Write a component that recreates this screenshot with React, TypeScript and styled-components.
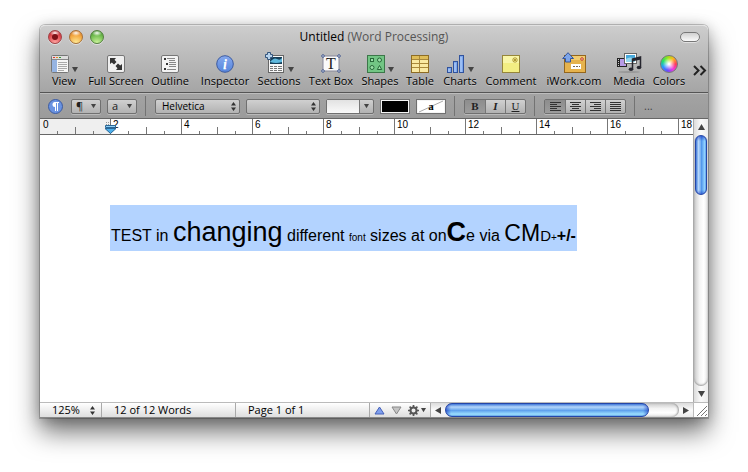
import React from 'react';
import styled, { createGlobalStyle, css } from 'styled-components';

const GlobalStyle = createGlobalStyle`
  * { box-sizing: border-box; }
  body { margin: 0; background: #fff; font-family: "Open Sans", "Noto Sans", sans-serif; font-size: 11px; color: #000; }
  button, select, input { font: inherit; color: inherit; margin: 0; padding: 0; border: 0; background: none; }
  svg { display: block; flex: none; }
`;

const Desktop = styled.main`
  padding: 25px 40px 54px;
`;

const Window = styled.section`
  display: flex;
  flex-direction: column;
  border-radius: 5px 5px 0 0;
  background: #fff;
  box-shadow: 0 0 0 1px rgba(0, 0, 0, 0.2), 0 14px 26px rgba(0, 0, 0, 0.55), 0 2px 14px rgba(0, 0, 0, 0.22);
`;

const Header = styled.header`
  border-radius: 5px 5px 0 0;
  border-top: 1px solid #e2e2e2;
  border-bottom: 1px solid #555;
  background: linear-gradient(#cdcdcd, #a5a5a5);
`;

const TitleBar = styled.div`
  display: grid;
  grid-template-columns: 1fr auto 1fr;
  align-items: center;
  height: 22px;
  padding: 0 8px;
`;

const Lights = styled.div`
  display: flex;
  gap: 7px;
`;

const Light = styled.button<{ $top: string; $main: string; $glow: string; $ring: string }>`
  width: 14px;
  height: 14px;
  border-radius: 50%;
  border: 1px solid ${(p) => p.$ring};
  background:
    radial-gradient(ellipse 5px 3px at 50% 2px, rgba(255, 255, 255, 0.95), rgba(255, 255, 255, 0) 100%),
    radial-gradient(circle at 50% 100%, ${(p) => p.$glow}, ${(p) => p.$main} 60%, ${(p) => p.$top});
  box-shadow: 0 1px 0 rgba(255, 255, 255, 0.5);
  display: flex;
  align-items: center;
  justify-content: center;
`;

const EditedDot = styled.span`
  width: 6px;
  height: 6px;
  border-radius: 50%;
  background: #7d1118;
`;

const Title = styled.h1`
  margin: 0;
  font-size: 12px;
  font-weight: 400;
  line-height: 20px;
  span { color: #555; }
`;

const Pill = styled.button`
  justify-self: end;
  width: 20px;
  height: 10px;
  border: 1px solid #777;
  border-radius: 5px;
  background: linear-gradient(#d0d0d0, #fafafa);
  box-shadow: 0 1px 0 rgba(255, 255, 255, 0.5);
`;

const Toolbar = styled.div`
  display: flex;
  gap: 4px;
  height: 44px;
  padding: 0 6px 0 7px;
`;

const ToolGroup = styled.div`
  display: flex;
`;

const Tool = styled.button<{ $width: number }>`
  width: ${(p) => p.$width}px;
  display: flex;
  flex-direction: column;
  align-items: center;
  white-space: nowrap;
  line-height: 16px;
  text-shadow: 0 1px 0 rgba(255, 255, 255, 0.35);
`;

const ToolArt = styled.span`
  display: flex;
  align-items: flex-end;
  justify-content: center;
  gap: 3px;
  height: 25px;
`;

const More = styled.button`
  margin-left: auto;
  align-self: center;
`;

const FormatBar = styled.div`
  display: flex;
  align-items: center;
  gap: 6px;
  height: 26px;
  padding: 0 8px;
  border-top: 1px solid #bdbdbd;
  border-bottom: 1px solid #666;
  background: linear-gradient(#a3a3a3, #9b9b9b);
`;

const Divider = styled.span`
  width: 1px;
  height: 20px;
  margin: 0 3px 0 2px;
  background: #737373;
`;

const bevel = css`
  height: 15px;
  border: 1px solid #707070;
  border-radius: 2px;
  background: linear-gradient(#d0d0d0, #b2b2b2);
  box-shadow: 0 1px 0 rgba(255, 255, 255, 0.3);
`;

const RoundButton = styled.button`
  margin-right: 2px;
`;

const MenuButton = styled.button`
  ${bevel}
  width: 30px;
  display: flex;
  align-items: center;
  justify-content: space-between;
  padding: 0 4px;
  line-height: 12px;
  color: #222;
`;

const PopupWrap = styled.span<{ $width: number }>`
  ${bevel}
  width: ${(p) => p.$width}px;
  display: flex;
  align-items: center;
  padding-right: 3px;
`;

const PopupSelect = styled.select`
  appearance: none;
  flex: 1;
  min-width: 0;
  height: 13px;
  padding-left: 6px;
  font-size: 10px;
  line-height: 12px;
`;

const ComboWrap = styled.span`
  ${bevel}
  width: 48px;
  display: flex;
  align-items: center;
`;

const ComboInput = styled.input`
  flex: 1;
  min-width: 0;
  height: 13px;
  background: linear-gradient(#e2e2e2, #fafafa);
  border-right: 1px solid #777;
`;

const ComboButton = styled.button`
  width: 13px;
  display: flex;
  justify-content: center;
`;

const Swatch = styled.button<{ $color: string }>`
  width: 30px;
  height: 15px;
  border: 1px solid #6f6f6f;
  background: ${(p) => p.$color};
  box-shadow: inset 0 0 0 1px #f4f4f4;
  display: flex;
`;

const Segments = styled.div`
  ${bevel}
  display: flex;
`;

const Segment = styled.button<{ $on?: boolean }>`
  width: 20px;
  height: 13px;
  display: flex;
  align-items: center;
  justify-content: center;
  color: #222;
  font-family: "Liberation Serif", serif;
  font-size: 11px;
  line-height: 13px;
  background: ${(p) => (p.$on ? 'linear-gradient(#8d8d8d, #9c9c9c)' : 'transparent')};
  & + & { border-left: 1px solid #777; }
`;

const Ellipsis = styled.span`
  color: #444;
  line-height: 12px;
`;

const Body = styled.div`
  display: grid;
  grid-template-columns: minmax(0, 1fr) 15px;
`;

const Ruler = styled.div`
  display: flex;
  height: 16px;
  overflow: hidden;
  border-bottom: 1px solid #666;
`;

const tick = 'linear-gradient(#777, #777) no-repeat';
const RulerCell = styled.div<{ $margin?: boolean }>`
  position: relative;
  flex: none;
  width: ${(p) => (p.$margin ? 70 : 71)}px;
  padding-left: ${(p) => (p.$margin ? 3 : 2)}px;
  border-left: ${(p) => (p.$margin ? 0 : 1)}px solid #777;
  font-family: "Liberation Sans", Arial, sans-serif;
  font-size: 10px;
  line-height: 12px;
  background: ${tick} 17px 12px / 1px 3px, ${tick} 35px 8px / 1px 7px, ${tick} 53px 12px / 1px 3px,
    ${(p) => (p.$margin ? '#efefef' : '#fff')};
`;

const IndentMarker = styled.span`
  position: absolute;
  left: -7px;
  top: 2px;
`;

const Page = styled.article`
  min-height: 267px;
  padding: 70px;
`;

const Line = styled.p`
  margin: 0;
  width: fit-content;
  height: 46px;
  padding: 0 1px;
  font-family: "Liberation Sans", Arial, sans-serif;
  font-size: 16px;
  line-height: 62px;
  white-space: nowrap;
  background: #b3d3ff;
`;

const Run = styled.span<{ $size: number; $bold?: boolean }>`
  font-size: ${(p) => p.$size}px;
  font-weight: ${(p) => (p.$bold ? 700 : 400)};
  line-height: 1;
`;

const VScroll = styled.div`
  grid-row: 1 / 3;
  grid-column: 2;
  display: flex;
  flex-direction: column;
  align-items: center;
  border-left: 1px solid #aaa;
  background: linear-gradient(90deg, #dcdcdc, #fbfbfb 50%, #ececec);
`;

const ArrowButton = styled.button`
  width: 14px;
  height: 16px;
  flex: none;
  display: flex;
  align-items: center;
  justify-content: center;
`;

const VTrack = styled.div`
  flex: 1;
  width: 14px;
  border-radius: 7px;
  background: linear-gradient(90deg, #c9c9c9, #f4f4f4 40%, #fff 70%, #e4e4e4);
  box-shadow: inset 0 -1px 2px #999;
`;

const VThumb = styled.div`
  height: 60px;
  margin: 0 1px;
  border-radius: 6px;
  border: 1px solid #2446a8;
  background:
    linear-gradient(rgba(20, 50, 190, 0.6), rgba(20, 50, 190, 0) 5px, rgba(20, 50, 190, 0) 54px, rgba(20, 50, 190, 0.5)),
    linear-gradient(90deg, #3f78d8, #b4d6fa 25%, #74aef0 48%, #4c92ea 52%, #8fd0ff 85%, #5fa0e6);
`;

const Footer = styled.footer`
  grid-column: 1 / 3;
  display: flex;
  height: 16px;
  border-top: 1px solid #bbb;
  border-bottom: 1px solid #888;
  background: linear-gradient(#fff, #dedede);
`;

const StatusCell = styled.div<{ $width: number }>`
  width: ${(p) => p.$width}px;
  flex: none;
  display: flex;
  align-items: center;
  padding-left: 12px;
  border-right: 1px solid #aaa;
  line-height: 14px;
  white-space: nowrap;
`;

const ZoomSelect = styled.select`
  appearance: none;
  width: 38px;
  height: 14px;
  line-height: 14px;
`;

const StatusButtons = styled.div`
  display: flex;
  align-items: center;
  gap: 6px;
  width: 60px;
  flex: none;
  padding-left: 4px;
`;

const IconButton = styled.button`
  display: flex;
  align-items: center;
  gap: 2px;
`;

const HScroll = styled.div`
  flex: 1;
  min-width: 0;
  display: flex;
  align-items: center;
  border-left: 1px solid #aaa;
  background: linear-gradient(#dcdcdc, #fbfbfb 50%, #ececec);
`;

const HTrack = styled.div`
  flex: 1;
  height: 14px;
  border-radius: 7px;
  background: linear-gradient(#c9c9c9, #f4f4f4 40%, #fff 70%, #e4e4e4);
  box-shadow: inset -1px 0 2px #999;
`;

const HThumb = styled.div`
  width: 87%;
  height: 14px;
  border-radius: 7px;
  border: 1px solid #2446a8;
  background:
    linear-gradient(90deg, rgba(20, 50, 190, 0.6), rgba(20, 50, 190, 0) 5px, rgba(20, 50, 190, 0) calc(100% - 5px), rgba(20, 50, 190, 0.5)),
    linear-gradient(#3f78d8, #b4d6fa 25%, #74aef0 48%, #5c9eec 52%, #9ce0ff 85%, #5fa0e6);
`;

const Grip = styled.div`
  width: 15px;
  flex: none;
  border-left: 1px solid #bbb;
  background: #fff;
`;

type Dir = 'up' | 'down' | 'left' | 'right';
const triangles: Record<Dir, string> = {
  up: '0,6 3.5,0 7,6',
  down: '0,0 7,0 3.5,6',
  left: '6,0 6,7 0,3.5',
  right: '0,0 0,7 6,3.5',
};

const Triangle = ({ dir, size = 7, fill = '#444' }: { dir: Dir; size?: number; fill?: string }) => (
  <svg width={size} height={size} viewBox="0 0 7 7" aria-hidden="true">
    <polygon points={triangles[dir]} fill={fill} />
  </svg>
);

const UpDown = () => (
  <svg width="5" height="9" viewBox="0 0 5 9" aria-hidden="true">
    <path d="M0 3.5 2.5 0 5 3.5zM0 5.5h5L2.5 9z" fill="#333" />
  </svg>
);

const ViewIcon = () => (
  <svg width="18" height="18" viewBox="0 0 18 18">
    <rect x=".5" y=".5" width="17" height="17" rx="1" fill="#f6f6f6" stroke="#777" />
    <rect x="1" y="1" width="16" height="3" fill="#ddd" />
    <rect x="2" y="2" width="2" height="1" fill="#d33" />
    <rect x="5" y="2" width="2" height="1" fill="#e98a20" />
    <rect x="8" y="2" width="2" height="1" fill="#393" />
    <path d="M1 4.5h16" stroke="#888" />
    <rect x="1" y="5" width="5" height="12" fill="#96b4e2" />
    <path d="M7 7.5h9M7 9.5h9M7 11.5h9M7 13.5h9M7 15.5h6" stroke="#aaa" />
  </svg>
);

const FullScreenIcon = () => (
  <svg width="18" height="18" viewBox="0 0 18 18">
    <rect x=".5" y=".5" width="17" height="17" rx="1.5" fill="#efefef" stroke="#777" />
    <path d="M3 3h6L7.500 4.800 9.500 7 7 9.500 4.800 7.500 3 9z" fill="#333" />
    <path d="M15 15H9l1.500-1.800L8.500 11 11 8.500l2.200 2L15 9z" fill="#333" />
  </svg>
);

const OutlineIcon = () => (
  <svg width="18" height="18" viewBox="0 0 18 18">
    <rect x=".5" y=".5" width="17" height="17" rx="1.5" fill="#f3f3f3" stroke="#777" />
    <path d="M6 3.500h8M8 5.500h6M8 7.500h7M8 9.500h7M8 11.500h7M6 14.500h9" stroke="#888" />
    <path d="M3 3h2v2H3zM5 8h2v2H5zM3 13h2v2H3z" fill="#333" />
  </svg>
);

const InspectorIcon = () => (
  <svg width="18" height="18" viewBox="0 0 18 18">
    <defs>
      <linearGradient id="insp" x2="0" y2="1">
        <stop stopColor="#86a9ee" />
        <stop offset="1" stopColor="#5685dc" />
      </linearGradient>
    </defs>
    <circle cx="9" cy="9" r="8.3" fill="url(#insp)" stroke="#3d5ba0" />
    <text x="9" y="14" textAnchor="middle" fontFamily="Liberation Serif" fontStyle="italic" fontWeight="700" fontSize="14" fill="#fff">i</text>
  </svg>
);

const SectionsIcon = () => (
  <svg width="20" height="21" viewBox="0 0 20 21">
    <rect x="3.500" y="3.500" width="15" height="17" fill="#f8f8f8" stroke="#666" />
    <rect x="5" y="5" width="12" height="7" fill="#163e58" />
    <path d="M5 10q4-5 7-3t5-1v4q-6 2-12 0z" fill="#5fb9de" />
    <path d="M5 14.500h3m1 0h3m1 0h4M5 16.500h3m1 0h3m1 0h4M5 18.500h3m1 0h3m1 0h4" stroke="#777" />
    <path d="M2.500 .5h3v2h2v3h-2v2h-3v-2h-2v-3h2z" fill="#b8d4ed" stroke="#34557c" />
  </svg>
);

const TextBoxIcon = () => (
  <svg width="20" height="19" viewBox="0 0 20 19">
    <rect x="2" y="2" width="16" height="15" fill="#fafafa" stroke="#889" />
    <text x="10" y="15" textAnchor="middle" fontFamily="Liberation Serif" fontSize="16" fill="#222">T</text>
    <g fill="#dbe4f4" stroke="#45598c">
      <circle cx="2" cy="2" r="1.300" />
      <circle cx="18" cy="2" r="1.300" />
      <circle cx="2" cy="17" r="1.300" />
      <circle cx="18" cy="17" r="1.300" />
    </g>
  </svg>
);

const ShapesIcon = () => (
  <svg width="18" height="18" viewBox="0 0 18 18">
    <rect x=".5" y=".5" width="17" height="17" fill="#72c584" stroke="#3c7749" />
    <g fill="#9be0a8" stroke="#29683a">
      <rect x="3.500" y="3.500" width="3" height="3" />
      <circle cx="12.500" cy="5" r="2" />
      <circle cx="5" cy="12.500" r="2" />
      <path d="M10.300 14.500h4.400L12.500 10.500z" />
    </g>
  </svg>
);

const TableIcon = () => (
  <svg width="18" height="18" viewBox="0 0 18 18">
    <rect x=".5" y=".5" width="17" height="17" fill="#f9e9a2" stroke="#8e6d24" />
    <rect x="1" y="1" width="16" height="3" fill="#dfbd58" />
    <path d="M1 4.500h16M1 8.500h16M1 12.500h16M8.500 1v16" stroke="#a9883a" />
  </svg>
);

const ChartsIcon = () => (
  <svg width="19" height="18" viewBox="0 0 19 18" fill="#7ba6ec" stroke="#31539d">
    <rect x="1.500" y="12.500" width="4" height="5" />
    <rect x="7.500" y="6.500" width="4" height="11" />
    <rect x="13.500" y=".5" width="4" height="17" />
    <path d="M3 14v3M9 8v9M15 2v15" stroke="#bdd6fb" />
  </svg>
);

const CommentIcon = () => (
  <svg width="18" height="18" viewBox="0 0 18 18">
    <rect x=".5" y=".5" width="17" height="17" fill="#f3ee83" stroke="#96863a" />
    <path d="M1 1h16v7H1z" fill="#f9f6a8" />
    <circle cx="13" cy="5" r="2.200" fill="none" stroke="#b39d35" />
    <path d="M11.500 3.500l3 3m0-3l-3 3" stroke="#b39d35" />
  </svg>
);

const IWorkIcon = () => (
  <svg width="24" height="21" viewBox="0 0 24 21">
    <rect x="2.500" y="3.500" width="21" height="17" fill="#e6b34d" stroke="#94661d" />
    <path d="M3 4h20v4H3z" fill="#f1cc70" />
    <rect x="9" y="12" width="10" height="5" fill="#fff" />
    <path d="M11 14.500h2m1 0h2m1 0h1" stroke="#765" />
    <circle cx="20" cy="7" r="1.300" fill="#fbdcd0" stroke="#c43b26" />
    <path d="M6 .7 11.500 6.500H8.500V10h-5V6.500H.7z" fill="#7da5e9" stroke="#31539d" />
  </svg>
);

const MediaIcon = () => (
  <svg width="26" height="20" viewBox="0 0 26 20">
    <ellipse cx="13" cy="19" rx="11" ry="1" fill="#999" />
    <rect x="1" y="5" width="10" height="9" fill="#222" />
    <rect x="4" y="6" width="6" height="7" fill="#b79be6" />
    <path d="M2.500 6v7" stroke="#ccc" strokeDasharray="1 1" />
    <rect x="8.500" y=".5" width="12" height="10" fill="#fff" stroke="#666" />
    <rect x="10" y="2" width="9" height="7" fill="#48a9dc" />
    <path d="M10 6q4-3 9 0v3h-9z" fill="#97d8ed" />
    <path d="M16.500 16V6l8-2v10.500" fill="none" stroke="#26262f" strokeWidth="1.500" />
    <path d="M16 6l9-2v2.500l-9 2z" fill="#26262f" />
    <ellipse cx="15" cy="16.300" rx="2.300" ry="1.700" fill="#26262f" />
    <ellipse cx="23" cy="14.500" rx="2.300" ry="1.700" fill="#26262f" />
  </svg>
);

const ColorWheel = styled.span`
  width: 18px;
  height: 18px;
  border-radius: 50%;
  border: 1px solid #777;
  background:
    radial-gradient(circle, #fff 5%, rgba(255, 255, 255, 0) 55%),
    conic-gradient(from 90deg, #ff3b5b, #f038e0, #6a4cff, #2599ff, #21e06a, #94e619, #ffb51b, #ff3b5b);
`;

const AlignIcon = ({ d }: { d: string }) => (
  <svg width="11" height="9" viewBox="0 0 11 9" stroke="#333" aria-hidden="true">
    <path d={d} />
  </svg>
);

const Gear = () => (
  <svg width="11" height="11" viewBox="0 0 11 11" aria-hidden="true">
    <circle cx="5.500" cy="5.500" r="3" fill="none" stroke="#555" strokeWidth="2" />
    <path d="M5.500 0v2M5.500 9v2M0 5.500h2M9 5.500h2M1.600 1.600 3 3M8 8l1.400 1.400M9.400 1.600 8 3M3 8 1.600 9.400" stroke="#555" strokeWidth="1.700" />
  </svg>
);

interface ToolDef {
  label: string;
  width: number;
  icon: React.ReactNode;
  menu?: boolean;
}

const toolGroups: ToolDef[][] = [
  [{ label: 'View', width: 34, icon: <ViewIcon />, menu: true }],
  [
    { label: 'Full Screen', width: 62, icon: <FullScreenIcon /> },
    { label: 'Outline', width: 46, icon: <OutlineIcon /> },
  ],
  [
    { label: 'Inspector', width: 56, icon: <InspectorIcon /> },
    { label: 'Sections', width: 52, icon: <SectionsIcon />, menu: true },
    { label: 'Text Box', width: 52, icon: <TextBoxIcon /> },
    { label: 'Shapes', width: 46, icon: <ShapesIcon />, menu: true },
    { label: 'Table', width: 34, icon: <TableIcon /> },
    { label: 'Charts', width: 46, icon: <ChartsIcon />, menu: true },
    { label: 'Comment', width: 56, icon: <CommentIcon /> },
  ],
  [{ label: 'iWork.com', width: 62, icon: <IWorkIcon /> }],
  [
    { label: 'Media', width: 40, icon: <MediaIcon /> },
    { label: 'Colors', width: 40, icon: <ColorWheel /> },
  ],
];

const aligns = [
  { name: 'Align left', d: 'M0 .5h11M0 2.500h7M0 4.500h11M0 6.500h7M0 8.500h11' },
  { name: 'Center', d: 'M0 .5h11M2 2.500h7M0 4.500h11M2 6.500h7M0 8.500h11' },
  { name: 'Align right', d: 'M0 .5h11M4 2.500h7M0 4.500h11M4 6.500h7M0 8.500h11' },
  { name: 'Justify', d: 'M0 .5h11M0 2.500h11M0 4.500h11M0 6.500h11M0 8.500h11' },
];

const rulerMarks = [2, 4, 6, 8, 10, 12, 14, 16, 18];

export default function App() {
  return (
    <>
      <GlobalStyle />
      <Desktop>
        <Window>
          <Header>
            <TitleBar>
              <Lights>
                <Light aria-label="Close" $top="#b3202a" $main="#e04a50" $glow="#ffa8a4" $ring="#a04044"><EditedDot /></Light>
                <Light aria-label="Minimize" $top="#cf6f20" $main="#f3a740" $glow="#ffee9a" $ring="#a67038" />
                <Light aria-label="Zoom" $top="#3c8a2c" $main="#72bd50" $glow="#d0f6a0" $ring="#54803f" />
              </Lights>
              <Title>Untitled <span>(Word Processing)</span></Title>
              <Pill aria-label="Toggle toolbar" />
            </TitleBar>
            <Toolbar>
              {toolGroups.map((group) => (
                <ToolGroup key={group[0].label}>
                  {group.map((t) => (
                    <Tool key={t.label} $width={t.width}>
                      <ToolArt>
                        {t.icon}
                        {t.menu && <Triangle dir="down" size={6} />}
                      </ToolArt>
                      {t.label}
                    </Tool>
                  ))}
                </ToolGroup>
              ))}
              <More aria-label="More tools">
                <svg width="14" height="11" viewBox="0 0 14 11" fill="none" stroke="#222" strokeWidth="2">
                  <path d="M1 1l4.500 4.500L1 10M7.500 1 12 5.500 7.500 10" />
                </svg>
              </More>
            </Toolbar>
          </Header>

          <FormatBar>
            <RoundButton aria-label="Styles drawer">
              <svg width="15" height="15" viewBox="0 0 15 15">
                <circle cx="7.500" cy="7.500" r="7" fill="#6a93e2" stroke="#3d5ba0" />
                <path d="M7.500 4v8M9.500 4v8M11 3.500H6.500" stroke="#fff" />
                <path d="M7 3a2.500 2.500 0 0 0 0 5z" fill="#fff" />
              </svg>
            </RoundButton>
            <MenuButton aria-label="Paragraph style">¶<Triangle dir="down" size={5} /></MenuButton>
            <MenuButton aria-label="Character style">a<Triangle dir="down" size={5} /></MenuButton>
            <Divider />
            <PopupWrap $width={85}>
              <PopupSelect aria-label="Font"><option>Helvetica</option></PopupSelect>
              <UpDown />
            </PopupWrap>
            <PopupWrap $width={74}>
              <PopupSelect aria-label="Typeface"><option></option></PopupSelect>
              <UpDown />
            </PopupWrap>
            <ComboWrap>
              <ComboInput aria-label="Font size" />
              <ComboButton aria-label="Choose font size"><Triangle dir="down" size={5} /></ComboButton>
            </ComboWrap>
            <Swatch aria-label="Text color" $color="#000" />
            <Swatch aria-label="Background color" $color="#fff">
              <svg width="28" height="13" viewBox="0 0 28 13">
                <path d="M2 12 26 1" stroke="#aaa" />
                <text x="14" y="10" textAnchor="middle" fontFamily="Liberation Serif" fontWeight="700" fontSize="11">a</text>
              </svg>
            </Swatch>
            <Divider />
            <Segments>
              <Segment $on aria-label="Bold"><b>B</b></Segment>
              <Segment aria-label="Italic"><b><i>I</i></b></Segment>
              <Segment aria-label="Underline"><u>U</u></Segment>
            </Segments>
            <Divider />
            <Segments>
              {aligns.map((a, i) => (
                <Segment key={a.name} aria-label={a.name} $on={i === 0}><AlignIcon d={a.d} /></Segment>
              ))}
            </Segments>
            <Divider />
            <Ellipsis>...</Ellipsis>
          </FormatBar>

          <Body>
            <Ruler>
              <RulerCell $margin>0</RulerCell>
              {rulerMarks.map((n, i) => (
                <RulerCell key={n}>
                  {n}
                  {i === 0 && (
                    <IndentMarker>
                      <svg width="13" height="13" viewBox="0 0 13 13">
                        <path d="M1.500 4.500h10v2h-10z" fill="#8fd0f6" stroke="#2a6797" />
                        <path d="M1 7.500h11L6.500 12.500z" fill="#4caeea" stroke="#2a6797" />
                        <path d="M2 1.500h4M2 3.500h4" stroke="#999" strokeDasharray="1 1" />
                      </svg>
                    </IndentMarker>
                  )}
                </RulerCell>
              ))}
            </Ruler>
            <Page>
              <Line>
                TEST in <Run $size={27}>changing</Run> different <Run $size={10}>font</Run> sizes at on
                <Run $size={27} $bold>C</Run>e via <Run $size={23}>CM</Run><Run $size={15}>D</Run>
                <Run $size={10}>+</Run><Run $size={16} $bold>+/-</Run>
              </Line>
            </Page>
            <VScroll>
              <ArrowButton aria-label="Scroll up"><Triangle dir="up" /></ArrowButton>
              <VTrack><VThumb /></VTrack>
              <ArrowButton aria-label="Scroll down"><Triangle dir="down" /></ArrowButton>
            </VScroll>
            <Footer>
              <StatusCell $width={62}>
                <ZoomSelect aria-label="Zoom level"><option>125%</option></ZoomSelect>
                <UpDown />
              </StatusCell>
              <StatusCell $width={134}>12 of 12 Words</StatusCell>
              <StatusCell $width={134}>Page 1 of 1</StatusCell>
              <StatusButtons>
                <IconButton aria-label="Previous page">
                  <svg width="11" height="9" viewBox="0 0 11 9"><path d="M5.500 1 10 8H1z" fill="#7f9fee" stroke="#4560b8" /></svg>
                </IconButton>
                <IconButton aria-label="Next page">
                  <svg width="11" height="9" viewBox="0 0 11 9"><path d="M5.500 8 10 1H1z" fill="#c4c4c4" stroke="#888" /></svg>
                </IconButton>
                <IconButton aria-label="Actions"><Gear /><Triangle dir="down" size={5} /></IconButton>
              </StatusButtons>
              <HScroll>
                <ArrowButton aria-label="Scroll left"><Triangle dir="left" /></ArrowButton>
                <HTrack><HThumb /></HTrack>
                <ArrowButton aria-label="Scroll right"><Triangle dir="right" /></ArrowButton>
              </HScroll>
              <Grip>
                <svg width="14" height="14" viewBox="0 0 14 14" stroke="#777">
                  <path d="M3 13 13 3M7 13l6-6M11 13l2-2" />
                </svg>
              </Grip>
            </Footer>
          </Body>
        </Window>
      </Desktop>
    </>
  );
}
